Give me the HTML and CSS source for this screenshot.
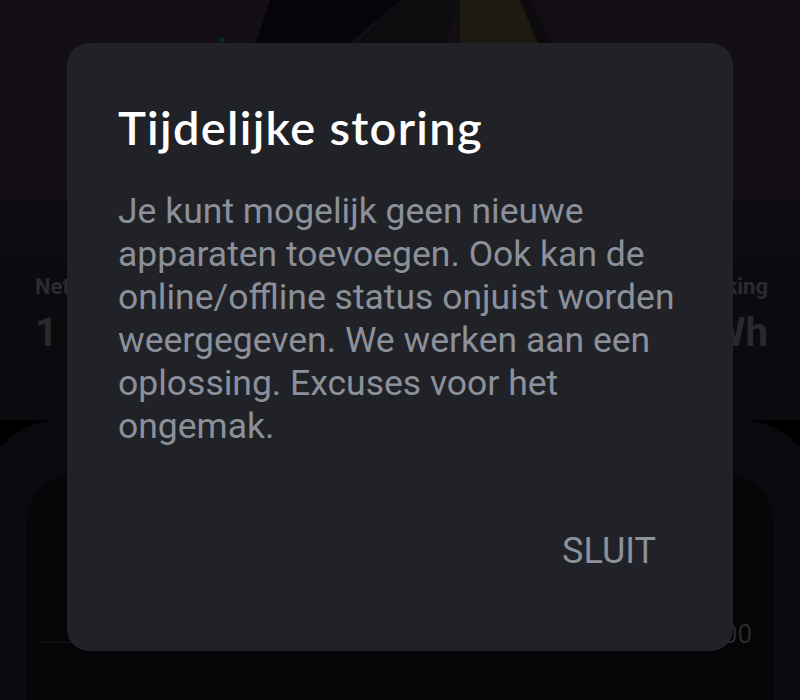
FILE: index.html
```html
<!DOCTYPE html>
<html lang="nl">
<head>
<meta charset="utf-8">
<title>Tijdelijke storing</title>
<link rel="stylesheet" href="styles.css">
</head>
<body>
<div class="page">
  <div class="hero">
    <svg class="hero-art" width="800" height="260" viewBox="0 0 800 260">
      <rect width="800" height="260" fill="#120e14"/>
      <polygon points="270,0 400,0 330,60 250,60" fill="#050408"/>
      <polygon points="400,0 460,0 440,60 340,60" fill="#0c0b0e"/>
      <polygon points="460,0 520,0 545,60 460,60" fill="#1d1a12"/>
      <polygon points="520,0 545,60 560,60 530,0" fill="#0c0a0c"/>
      <circle cx="222" cy="40" r="3" fill="#0e2a1a"/>
      <rect y="200" width="800" height="60" fill="#0d0b11"/>
    </svg>
  </div>
  <div class="stats">
    <div class="stat">
      <div class="stat-label">Netverbruik</div>
      <div class="stat-value">1&nbsp;&nbsp;kWh</div>
    </div>
    <div class="stat stat-right">
      <div class="stat-label">Opwekking</div>
      <div class="stat-value">3,4 kWh</div>
    </div>
  </div>
  <div class="chart-outer">
    <div class="chart-panel">
      <div class="chart-card">
        <div class="chart-axis">
          <span class="axis-line"></span>
          <span class="axis-label">1200</span>
        </div>
      </div>
    </div>
  </div>
</div>

<div class="dialog" role="dialog">
  <h1 class="dialog-title">Tijdelijke storing</h1>
  <p class="dialog-text">Je kunt mogelijk geen nieuwe apparaten toevoegen. Ook kan de online/offline status onjuist worden weergegeven. We werken aan een oplossing. Excuses voor het ongemak.</p>
  <div class="dialog-actions">
    <button class="dialog-btn">SLUIT</button>
  </div>
</div>
</body>
</html>
```

FILE: styles.css
```css
html, body {
  margin: 0;
  padding: 0;
}
body {
  width: 800px;
  height: 700px;
  overflow: hidden;
  background: #000;
  font-family: Roboto, "Liberation Sans", sans-serif;
  position: relative;
}
.page {
  display: flex;
  flex-direction: column;
  height: 700px;
  overflow: hidden;
}
.hero-art {
  display: block;
}
.stats {
  display: flex;
  justify-content: space-between;
  padding: 14px 32px 0 35px;
  height: 146px;
  flex-shrink: 0;
  background: #0b0a0f;
}
.stat-label {
  color: #2b2a2f;
  font-size: 22px;
  font-weight: 700;
}
.stat-value {
  color: #29282c;
  font-size: 40px;
  font-weight: 700;
  margin-top: 10px;
}
.stat-right {
  text-align: right;
}
.chart-outer {
  flex: 1;
  background: #000;
  overflow: hidden;
}
.chart-panel {
  margin: 0 -20px;
  height: 100%;
  padding-top: 55px;
  background: #0a090d;
  border-radius: 80px 80px 0 0;
}
.chart-card {
  margin: 0 47px;
  height: 100%;
  background: #050507;
  border-radius: 45px 45px 0 0;
}
.chart-axis {
  display: flex;
  align-items: flex-end;
  padding: 144px 21px 0 13px;
}
.axis-line {
  flex: 1;
  height: 1px;
  background: #141318;
  margin-bottom: 6px;
}
.axis-label {
  color: #2a2a2e;
  font-size: 26px;
  margin-left: 6px;
}
.dialog {
  position: absolute;
  left: 67px;
  top: 43px;
  width: 666px;
  height: 608px;
  box-sizing: border-box;
  background: #212227;
  border-radius: 22px;
  padding: 54px 51px 0 51px;
  display: flex;
  flex-direction: column;
}
.dialog-title {
  margin: 0;
  color: #ffffff;
  font-family: Lato, "Noto Sans", sans-serif;
  font-weight: 600;
  font-size: 47px;
  line-height: 60px;
  letter-spacing: 1.3px;
}
.dialog-text {
  margin: 33px 0 0 0;
  color: #8b909a;
  font-size: 35.5px;
  line-height: 43px;
}
.dialog-actions {
  display: flex;
  justify-content: flex-end;
  margin-top: auto;
  padding: 0 26px 80px 0;
}
.dialog-btn {
  background: none;
  border: 0;
  padding: 0;
  color: #8c919b;
  font-family: Roboto, "Liberation Sans", sans-serif;
  font-size: 36px;
  line-height: 40px;
}
```
